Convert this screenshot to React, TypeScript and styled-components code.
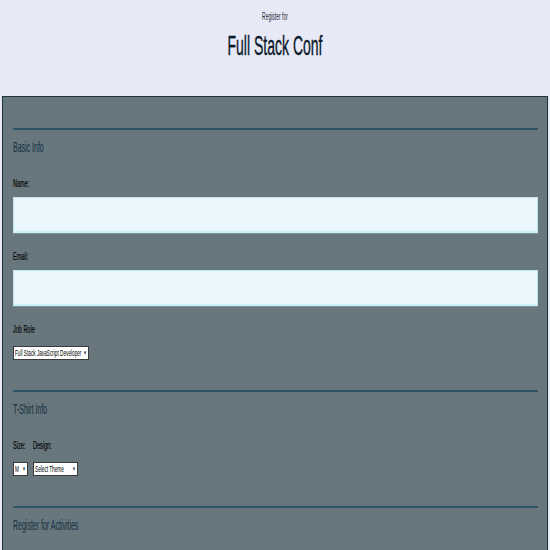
import React from "react";
import styled, { createGlobalStyle } from "styled-components";

const Global = createGlobalStyle`
  html, body { margin: 0; padding: 0; overflow: hidden; background: #e8e9f6; }
  #root { width: 550px; height: 550px; overflow: hidden; }
  * { box-sizing: border-box; }
`;

const Page = styled.div`
  width: 1100px;
  transform: scaleX(0.5);
  transform-origin: 0 0;
  font-family: "Liberation Sans", Arial, sans-serif;
`;

const Header = styled.header`
  padding: 11px 0 34px;
  text-align: center;
`;

const Kicker = styled.p`
  margin: 0 0 7px;
  font-size: 10px;
  line-height: 12px;
  color: #1f2a36;
`;

const Title = styled.h1`
  margin: 0;
  font-size: 28px;
  line-height: 32px;
  font-weight: 400;
  color: #0b1b2b;
  -webkit-text-stroke: 0.4px #0b1b2b;
`;

const Form = styled.form`
  margin: 0 4px;
  min-height: 480px;
  background: #67777d;
  border-top: 1px solid #1b3441;
  border-left: 2px solid #1b3441;
  border-right: 2px solid #1b3441;
  padding: 31px 18px 0 20px;
`;

const Fieldset = styled.fieldset<{ $top: number }>`
  margin: ${(p) => p.$top}px 0 0;
  padding: 9px 0 0;
  min-width: 0;
  border: 0;
  border-top: 2px solid #2f5367;
`;

const SectionTitle = styled.h2`
  margin: 0 0 22px;
  font-size: 14px;
  line-height: 16px;
  font-weight: 400;
  color: #1c3546;
  -webkit-text-stroke: 0.15px #1c3546;
`;

const Stack = styled.div`
  display: flex;
  flex-direction: column;
  gap: 17px;
`;

const Row = styled.div`
  display: flex;
  gap: 10px;
`;

const Field = styled.div`
  display: flex;
  flex-direction: column;
  align-items: flex-start;
`;

const Label = styled.label<{ $gap: number }>`
  display: block;
  margin-bottom: ${(p) => p.$gap}px;
  font-size: 11px;
  line-height: 13px;
  color: #050505;
  -webkit-text-stroke: 0.2px #050505;
`;

const TextInput = styled.input`
  display: block;
  width: 100%;
  height: 36px;
  margin: 0;
  background: #e9f6fc;
  border-style: solid;
  border-color: #bde6f3;
  border-width: 1px 2px 2px;
  border-bottom-color: #cdeff8;
  box-shadow: 0 1px 0 #7d939c;
  outline: none;
`;

const SelectBox = styled.div<{ $w: number }>`
  display: flex;
  align-items: center;
  width: ${(p) => p.$w}px;
  height: 14px;
  background: #fff;
  border-style: solid;
  border-color: #3a3a3a;
  border-width: 1px 2px;
`;

const Select = styled.select`
  appearance: none;
  -webkit-appearance: none;
  flex: 1;
  min-width: 0;
  height: 12px;
  margin: 0;
  padding: 0 0 0 2px;
  font-family: inherit;
  font-size: 9.4px;
  line-height: 12px;
  color: #000;
  background: transparent;
  border: 0;
  border-radius: 0;
  outline: none;
`;

const Arrow = styled.span`
  flex: none;
  width: 9px;
  font-size: 6px;
  line-height: 12px;
  color: #000;
  text-align: left;
`;

type Opt = { value: string; label: string };

function Dropdown({ id, w, value, options }: { id: string; w: number; value: string; options: Opt[] }) {
  return (
    <SelectBox $w={w}>
      <Select id={id} defaultValue={value}>
        {options.map((o) => (
          <option key={o.value} value={o.value}>
            {o.label}
          </option>
        ))}
      </Select>
      <Arrow>▼</Arrow>
    </SelectBox>
  );
}

export default function App() {
  return (
    <>
      <Global />
      <Page>
        <Header>
          <Kicker>Register for</Kicker>
          <Title>Full Stack Conf</Title>
        </Header>
        <Form>
          <Fieldset $top={0}>
            <SectionTitle>Basic Info</SectionTitle>
            <Stack>
              <div>
                <Label $gap={7} htmlFor="name">Name:</Label>
                <TextInput id="name" type="text" />
              </div>
              <div>
                <Label $gap={7} htmlFor="mail">Email:</Label>
                <TextInput id="mail" type="email" />
              </div>
              <Field>
                <Label $gap={10} htmlFor="title">Job Role</Label>
                <Dropdown
                  id="title"
                  w={152}
                  value="fs"
                  options={[
                    { value: "fs", label: "Full Stack JavaScript Developer" },
                    { value: "fe", label: "Front End Developer" },
                    { value: "be", label: "Back End Developer" },
                    { value: "de", label: "Designer" },
                    { value: "st", label: "Student" },
                    { value: "ot", label: "Other" },
                  ]}
                />
              </Field>
            </Stack>
          </Fieldset>
          <Fieldset $top={30}>
            <SectionTitle>T-Shirt Info</SectionTitle>
            <Row>
              <Field>
                <Label $gap={10} htmlFor="size">Size:</Label>
                <Dropdown
                  id="size"
                  w={30}
                  value="m"
                  options={[
                    { value: "s", label: "S" },
                    { value: "m", label: "M" },
                    { value: "l", label: "L" },
                    { value: "xl", label: "XL" },
                  ]}
                />
              </Field>
              <Field>
                <Label $gap={10} htmlFor="design">Design:</Label>
                <Dropdown
                  id="design"
                  w={90}
                  value="select"
                  options={[
                    { value: "select", label: "Select Theme" },
                    { value: "puns", label: "Theme - JS Puns" },
                    { value: "heart", label: "Theme - I ♥ JS" },
                  ]}
                />
              </Field>
            </Row>
          </Fieldset>
          <Fieldset $top={30}>
            <SectionTitle>Register for Activities</SectionTitle>
          </Fieldset>
        </Form>
      </Page>
    </>
  );
}
